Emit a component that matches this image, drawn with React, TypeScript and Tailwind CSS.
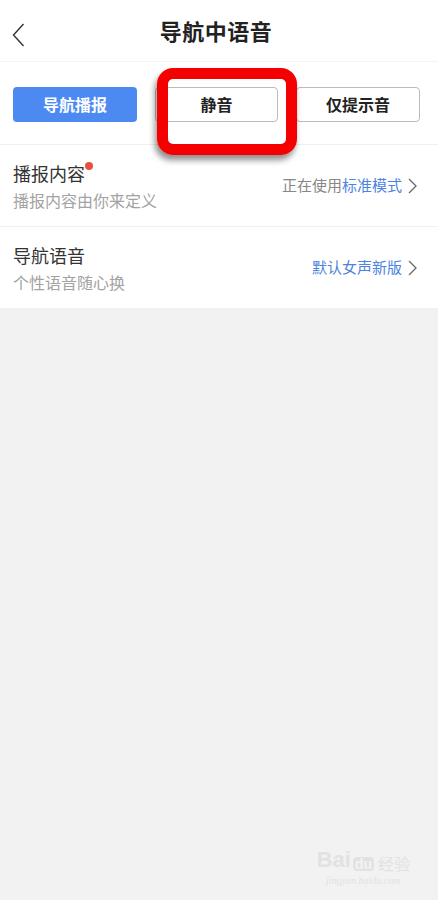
const font = { fontFamily: '"Noto Sans CJK SC", "Noto Sans", sans-serif' }

function Chevron() {
  return (
    <svg width="9" height="16" viewBox="0 0 9 16" className="ml-[6px]">
      <polyline points="1,1 8,8 1,15" fill="none" stroke="#666" strokeWidth="1.3" />
    </svg>
  )
}

function Row({ title, sub, dot, right }: { title: string; sub: string; dot?: boolean; right: React.ReactNode }) {
  return (
    <div className="h-[82px] flex items-center justify-between pl-[13px] pr-[21px] border-b border-[#f0f0f0]">
      <div className="flex flex-col gap-[4px]">
        <div className="relative w-fit text-[18px] leading-[24px] text-[#333]">
          {title}
          {dot && <span className="absolute -right-[8px] top-[1px] w-[8px] h-[8px] rounded-full bg-[#e8503f]" />}
        </div>
        <div className="text-[16px] leading-[22px] text-[#a3a3a3]">{sub}</div>
      </div>
      <div className="flex items-center text-[15px]">
        {right}
        <Chevron />
      </div>
    </div>
  )
}

export default function App() {
  return (
    <div style={font} className="w-[438px] h-[900px] bg-[#f2f2f2] relative overflow-hidden">
      <div className="bg-white">
        <div className="h-[62px] flex items-center justify-center relative border-b border-[#f4f4f4]">
          <svg className="absolute left-[12px] top-[23px]" width="13" height="24" viewBox="0 0 13 24">
            <polyline points="11.5,1 1.5,12 11.5,23" fill="none" stroke="#333" strokeWidth="1.4" />
          </svg>
          <span className="text-[22px] font-bold text-[#222] tracking-[0.5px] -ml-[6px]">导航中语音</span>
        </div>
        <div className="h-[83px] flex items-center gap-[18px] pl-[13px] pt-[2px] border-b border-[#f0f0f0]">
          <div className="w-[124px] h-[35px] rounded-[4px] bg-[#4c8af2] text-white text-[16px] font-bold flex items-center justify-center">导航播报</div>
          <div className="w-[123px] h-[35px] rounded-[4px] border border-[#bbb] text-[#222] text-[16px] font-bold flex items-center justify-center">静音</div>
          <div className="w-[124px] h-[35px] rounded-[4px] border border-[#bbb] text-[#222] text-[16px] font-bold flex items-center justify-center">仅提示音</div>
        </div>
        <Row
          title="播报内容"
          sub="播报内容由你来定义"
          dot
          right={
            <span>
              <span className="text-[#888]">正在使用</span>
              <span className="text-[#4c84e0]">标准模式</span>
            </span>
          }
        />
        <Row title="导航语音" sub="个性语音随心换" right={<span className="text-[#4c84e0]">默认女声新版</span>} />
      </div>

      <div className="absolute left-[157px] top-[68px] w-[140px] h-[87px] rounded-[16px] border-[11px] border-[#f40000] shadow-[-2px_5px_6px_rgba(0,0,0,0.45)]" />

      <div className="absolute right-[28px] bottom-[12px] flex flex-col items-center text-[#e2e2e2]">
        <div className="flex items-end gap-[2px]">
          <span className="text-[22px] font-bold leading-none" style={{ fontFamily: '"Liberation Sans", sans-serif' }}>Bai</span>
          <span className="text-[14px] font-bold leading-none bg-[#e2e2e2] text-[#f2f2f2] rounded-[4px] px-[2px]" style={{ fontFamily: '"Liberation Sans", sans-serif' }}>du</span>
          <span className="text-[16px] leading-none ml-[2px]">经验</span>
        </div>
        <span className="text-[10px] italic mt-[2px]" style={{ fontFamily: '"Liberation Serif", serif' }}>jingyan.baidu.com</span>
      </div>
    </div>
  )
}
